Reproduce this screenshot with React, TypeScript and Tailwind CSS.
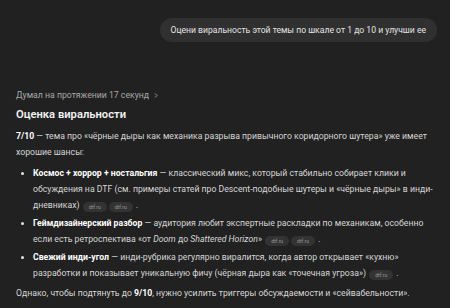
import type { ReactNode } from "react";

function Source() {
  return (
    <span className="mx-[1px] inline-block h-[10px] rounded-full bg-[#333333] px-[6px] align-[-1px] text-[5px] leading-[10px] text-[#9a9a9a]">
      dtf.ru
    </span>
  );
}

function Bullet({ children }: { children: ReactNode }) {
  return (
    <li className="flex gap-[9px]">
      <span className="mt-[7px] h-[3px] w-[3px] shrink-0 rounded-full bg-[#e5e5e5]" />
      <div className="whitespace-nowrap">{children}</div>
    </li>
  );
}

export default function App() {
  return (
    <div
      className="h-[308px] w-[450px] overflow-hidden bg-[#212121] text-[#d6d6d6]"
      style={{ fontFamily: 'Roboto, "Noto Sans", sans-serif' }}
    >
      {/* User message */}
      <div className="flex justify-end pr-[13px] pt-[18px]">
        <div className="rounded-full bg-[#303030] px-[11px] py-[5px] text-[8.6px] leading-[14px] text-[#e3e3e3]">
          Оцени виральность этой темы по шкале от 1 до 10 и улучши ее
        </div>
      </div>

      {/* Assistant answer */}
      <div className="px-[16px] pt-[45px] text-[8.7px] leading-[16px]">
        <div className="flex items-center gap-[4px] text-[#a8a8a8]">
          <span>Думал на протяжении 17 секунд</span>
          <svg width="6" height="7" viewBox="0 0 6 7" fill="none">
            <path d="M2 1.5l2 2-2 2" stroke="#a8a8a8" strokeWidth="0.9" />
          </svg>
        </div>

        <h3 className="mt-[3px] text-[11.2px] font-semibold leading-[18px] text-[#f2f2f2]">
          Оценка виральности
        </h3>

        <p className="mt-[4px] whitespace-nowrap">
          <b className="font-bold text-white">7/10</b> — тема про «чёрные дыры как механика разрыва
          привычного коридорного шутера» уже имеет
          <br />
          хорошие шансы:
        </p>

        <ul className="mt-[5px] flex flex-col gap-[2px] pl-[5px]">
          <Bullet>
            <b className="font-bold text-white">Космос + хоррор + ностальгия</b> — классический микс,
            который стабильно собирает клики и
            <br />
            обсуждения на DTF (см. примеры статей про Descent-подобные шутеры и «чёрные дыры» в инди-
            <br />
            дневниках) <Source />
            <Source /> .
          </Bullet>
          <Bullet>
            <b className="font-bold text-white">Геймдизайнерский разбор</b> — аудитория любит
            экспертные раскладки по механикам, особенно
            <br />
            если есть ретроспектива «от <i>Doom</i> до <i>Shattered Horizon</i>» <Source />
            <Source /> .
          </Bullet>
          <Bullet>
            <b className="font-bold text-white">Свежий инди-угол</b> — инди-рубрика регулярно
            виралится, когда автор открывает «кухню»
            <br />
            разработки и показывает уникальную фичу (чёрная дыра как «точечная угроза»){" "}
            <Source /> .
          </Bullet>
        </ul>

        <p className="mt-[4px] whitespace-nowrap">
          Однако, чтобы подтянуть до <b className="font-bold text-white">9/10</b>, нужно усилить
          триггеры обсуждаемости и «сейвабельности».
        </p>
      </div>
    </div>
  );
}
